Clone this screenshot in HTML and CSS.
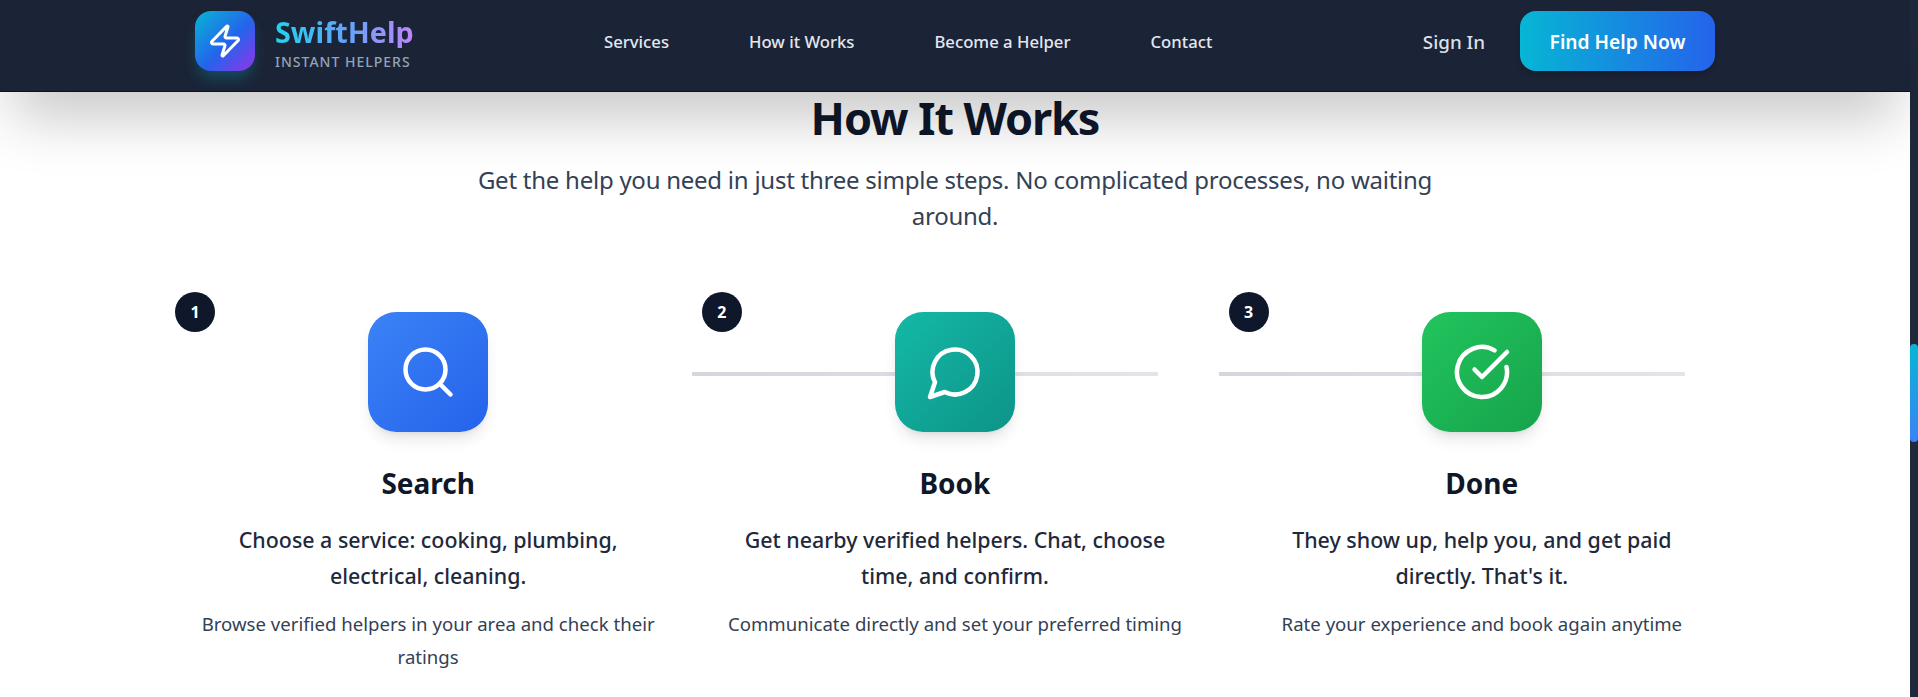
FILE: index.html
```html
<!DOCTYPE html>
<html lang="en">
<head>
<meta charset="utf-8">
<title>SwiftHelp</title>
<link rel="stylesheet" href="styles.css">
</head>
<body>
<div class="page">
  <header class="topbar">
    <div class="brand">
      <div class="logo">
        <svg viewBox="0 0 24 24" width="36" height="36" fill="none" stroke="#fff" stroke-width="2" stroke-linecap="round" stroke-linejoin="round"><path d="M4 14a1 1 0 0 1-.78-1.63l9.9-10.2a.5.5 0 0 1 .86.46l-1.92 6.02A1 1 0 0 0 13 10h7a1 1 0 0 1 .78 1.63l-9.9 10.2a.5.5 0 0 1-.86-.46l1.92-6.02A1 1 0 0 0 11 14z"/></svg>
      </div>
      <div class="brand-text">
        <span class="brand-name">SwiftHelp</span>
        <span class="brand-tag">INSTANT HELPERS</span>
      </div>
    </div>
    <nav class="nav">
      <a>Services</a>
      <a>How it Works</a>
      <a>Become a Helper</a>
      <a>Contact</a>
    </nav>
    <div class="actions">
      <a class="signin">Sign In</a>
      <a class="cta">Find Help Now</a>
    </div>
  </header>
  <main class="content">
    <h1 class="title">How It Works</h1>
    <p class="subtitle">Get the help you need in just three simple steps. No complicated processes, no waiting around.</p>
    <section class="steps">
      <article class="step">
        <span class="badge">1</span>
        <div class="icon icon-blue">
          <svg viewBox="0 0 24 24" width="60" height="60" fill="none" stroke="#fff" stroke-width="1.8" stroke-linecap="round" stroke-linejoin="round"><path d="m21 21-4.3-4.3"/><circle cx="11" cy="11" r="8"/></svg>
        </div>
        <h3>Search</h3>
        <p class="lead">Choose a service: cooking, plumbing, electrical, cleaning.</p>
        <p class="note">Browse verified helpers in your area and check their ratings</p>
      </article>
      <article class="step">
        <span class="badge">2</span>
        <span class="line"></span>
        <div class="icon icon-teal">
          <svg viewBox="0 0 24 24" width="60" height="60" fill="none" stroke="#fff" stroke-width="1.8" stroke-linecap="round" stroke-linejoin="round"><path d="M7.9 20A9 9 0 1 0 4 16.1L2 22Z"/></svg>
        </div>
        <h3>Book</h3>
        <p class="lead">Get nearby verified helpers. Chat, choose time, and confirm.</p>
        <p class="note">Communicate directly and set your preferred timing</p>
      </article>
      <article class="step">
        <span class="badge">3</span>
        <span class="line"></span>
        <div class="icon icon-green">
          <svg viewBox="0 0 24 24" width="60" height="60" fill="none" stroke="#fff" stroke-width="1.8" stroke-linecap="round" stroke-linejoin="round"><path d="M21.801 10A10 10 0 1 1 17 3.335"/><path d="m9 11 3 3L22 4"/></svg>
        </div>
        <h3>Done</h3>
        <p class="lead">They show up, help you, and get paid directly. That's it.</p>
        <p class="note">Rate your experience and book again anytime</p>
      </article>
    </section>
  </main>
</div>
<aside class="scrollbar"><div class="thumb"></div></aside>
</body>
</html>
```
FILE: styles.css
```css
* { box-sizing: border-box; }
html, body { height: 100%; }
body {
  margin: 0;
  display: flex;
  height: 697px;
  overflow: hidden;
  background: #fff;
  font-family: "Noto Sans", "Open Sans", "Liberation Sans", sans-serif;
  color: #0f172a;
}
.page { flex: 1; min-width: 0; }
.scrollbar { width: 8px; background: #1e293b; padding-top: 344px; }
.thumb { height: 98px; border-radius: 4px; background: linear-gradient(180deg, #06b6d4, #3b82f6); }

.topbar {
  position: relative;
  z-index: 2;
  height: 92px;
  display: flex;
  align-items: center;
  padding: 0 195px 10px 195px;
  background: #1b2336;
  border-bottom: 1px solid #0d0f24;
  box-shadow: 0 35px 60px -12px rgba(0,0,0,.24);
}
.brand { display: flex; align-items: center; gap: 20px; width: 409px; }
.logo {
  width: 60px; height: 60px; border-radius: 16px;
  display: flex; align-items: center; justify-content: center;
  background: linear-gradient(135deg, #06b6d4, #2563eb 55%, #9333ea);
  box-shadow: 0 10px 15px -3px rgba(6,182,212,.3);
}
.brand-text { display: flex; flex-direction: column; gap: 4px; padding-top: 6px; }
.brand-name {
  font-size: 28.8px; line-height: 32px; font-weight: 700;
  background: linear-gradient(90deg, #22d3ee, #60a5fa, #c084fc);
  -webkit-background-clip: text; background-clip: text; color: transparent;
}
.brand-tag { font-size: 14px; line-height: 20px; letter-spacing: 1px; color: #94a3b8; font-weight: 500; }
.nav { display: flex; gap: 80px; flex: 1; padding-top: 2px; }
.nav a { font-size: 16.7px; font-weight: 500; color: #e2e8f0; }
.actions { display: flex; align-items: center; gap: 35px; }
.signin { font-size: 18.8px; font-weight: 500; color: #dbe1ea; padding-top: 2px; }
.cta {
  width: 195px; height: 60px; border-radius: 16px; padding-top: 2px;
  display: flex; align-items: center; justify-content: center;
  font-size: 19.2px; font-weight: 600; color: #fff;
  background: linear-gradient(90deg, #06b6d4, #2563eb);
  box-shadow: 0 4px 6px -1px rgba(0,0,0,.2);
}

.content { padding-top: 2px; }
.title { margin: 0; font-size: 45px; line-height: 48px; font-weight: 700; letter-spacing: -1.1px; text-align: center; color: #0f172a; }
.subtitle { margin: 20px auto 0; max-width: 960px; font-size: 24px; line-height: 36px; letter-spacing: -.25px; text-align: center; color: #334155; }
.steps { width: 1534px; margin: 58px auto 0; display: grid; grid-template-columns: repeat(3, 1fr); gap: 46.5px; }
.step { position: relative; text-align: center; padding-top: 20px; }
.badge {
  position: absolute; left: -13px; top: 0;
  width: 40px; height: 40px; border-radius: 50%;
  display: flex; align-items: center; justify-content: center;
  background: #0f172a; color: #fff; font-size: 16px; font-weight: 700;
}
.line { position: absolute; left: -23px; width: 466px; top: 80px; height: 4px; background: linear-gradient(90deg, #d4d5dd, #e4e5ea); }
.icon {
  position: relative;
  width: 120px; height: 120px; border-radius: 28px; margin: 0 auto 33px;
  display: flex; align-items: center; justify-content: center;
  box-shadow: 0 10px 15px -3px rgba(0,0,0,.1), 0 4px 6px -4px rgba(0,0,0,.1);
}
.icon-blue { background: linear-gradient(135deg, #3b82f6, #2563eb); }
.icon-teal { background: linear-gradient(135deg, #14b8a6, #0d9488); }
.icon-green { background: linear-gradient(135deg, #22c55e, #16a34a); }
.step h3 { margin: 0 0 21px; font-size: 28px; line-height: 36px; font-weight: 700; color: #0f172a; }
.lead { margin: 0 auto 13px; max-width: 430px; font-size: 21.4px; line-height: 36px; font-weight: 500; color: #1e293b; }
.note { margin: 0; font-size: 18.6px; line-height: 33px; color: #334155; }
```
